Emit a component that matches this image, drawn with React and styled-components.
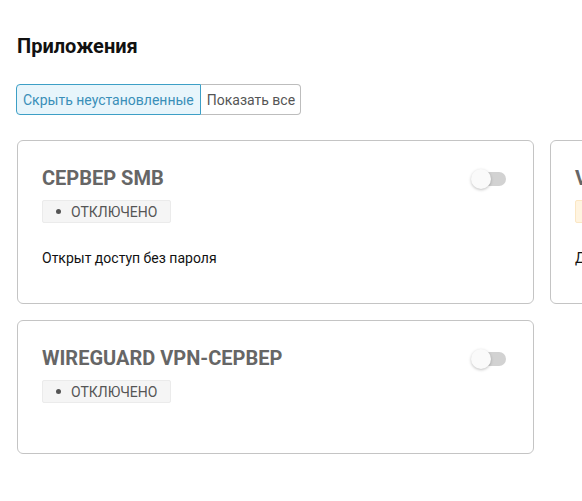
import React from "react";
import styled, { createGlobalStyle } from "styled-components";

const Global = createGlobalStyle`
  html, body { margin: 0; padding: 0; background: #fff; overflow: hidden; }
  body { font-family: Roboto, "Noto Sans", Arial, sans-serif; color: #111; }
`;

const Page = styled.div`
  padding: 34px 17px 0 17px;
  width: 1100px;
`;

const Heading = styled.h1`
  margin: 0;
  font-size: 20px;
  line-height: 24px;
  font-weight: 700;
  color: #111;
`;

const Segmented = styled.div`
  display: inline-flex;
  margin-top: 26px;
  margin-left: -1px;
`;

const SegButton = styled.button`
  font-family: inherit;
  font-size: 14px;
  height: 31px;
  padding: 0 6px;
  margin: 0;
  cursor: pointer;
  border: 1px solid ${(p) => (p.$active ? "#3d9fc6" : "#bdbdbd")};
  background: ${(p) => (p.$active ? "#e8f5fb" : "#fff")};
  color: ${(p) => (p.$active ? "#3a8fb8" : "#555")};
  border-radius: ${(p) => (p.$first ? "4px 0 0 4px" : "0 4px 4px 0")};
  ${(p) => (!p.$first ? "border-left: none; padding: 0 5px 0 6px;" : "")}
`;

const Grid = styled.div`
  display: grid;
  grid-template-columns: repeat(2, 517px);
  gap: 16px;
  margin-top: 25px;
  align-items: start;
`;

const Card = styled.div`
  box-sizing: border-box;
  border: 1px solid #c4c4c4;
  border-radius: 6px;
  padding: 24px 24px 24px 24px;
  min-height: ${(p) => p.$minH || 133}px;
`;

const Header = styled.div`
  display: flex;
  justify-content: space-between;
  align-items: flex-start;
`;

const Title = styled.div`
  font-size: 20px;
  line-height: 26px;
  font-weight: 700;
  color: #666;
  text-transform: uppercase;
  white-space: nowrap;
`;

const Switch = styled.div`
  position: relative;
  width: 35px;
  height: 20px;
  margin-top: 4px;
  margin-right: 3px;
`;

const Track = styled.div`
  position: absolute;
  left: 3px;
  right: 0;
  top: 3px;
  height: 14px;
  border-radius: 7px;
  background: ${(p) => (p.$warn ? "#f5d9a8" : "#d2d2d2")};
`;

const Thumb = styled.div`
  position: absolute;
  left: 0;
  top: 0;
  width: 20px;
  height: 20px;
  border-radius: 50%;
  background: #fafafa;
  box-shadow: 0 1px 3px rgba(0, 0, 0, 0.25);
`;

const Badge = styled.div`
  display: inline-flex;
  align-items: center;
  gap: 10px;
  margin-top: 9px;
  height: 23px;
  box-sizing: border-box;
  padding: 0 13px 0 13px;
  font-size: 14px;
  color: #555;
  background: ${(p) => (p.$warn ? "#fff4e0" : "#f5f5f5")};
  border: 1px solid ${(p) => (p.$warn ? "#fbe7c4" : "#ebebeb")};
  border-radius: 2px;
  text-transform: uppercase;
`;

const Dot = styled.span`
  width: 5px;
  height: 5px;
  border-radius: 50%;
  background: #555;
`;

const Desc = styled.p`
  margin: 25px 0 0 0;
  font-size: 14px;
  line-height: 20px;
  color: #111;
`;

const apps = [
  { title: "Сервер SMB", status: "Отключено", desc: "Открыт доступ без пароля", minH: 164 },
  { title: "VPN-сервер", status: "Отключено", desc: "Доступ", minH: 164, warn: true },
  { title: "WireGuard VPN-сервер", status: "Отключено", desc: null, minH: 134 },
];

function AppCard({ app }) {
  return (
    <Card $minH={app.minH}>
      <Header>
        <Title>{app.title}</Title>
        <Switch>
          <Track />
          <Thumb />
        </Switch>
      </Header>
      <Badge $warn={app.warn}>
        <Dot />
        {app.status}
      </Badge>
      {app.desc && <Desc>{app.desc}</Desc>}
    </Card>
  );
}

export default function App() {
  return (
    <>
      <Global />
      <Page>
        <Heading>Приложения</Heading>
        <Segmented>
          <SegButton $active $first>Скрыть неустановленные</SegButton>
          <SegButton>Показать все</SegButton>
        </Segmented>
        <Grid>
          {apps.map((a) => (
            <AppCard key={a.title} app={a} />
          ))}
        </Grid>
      </Page>
    </>
  );
}
